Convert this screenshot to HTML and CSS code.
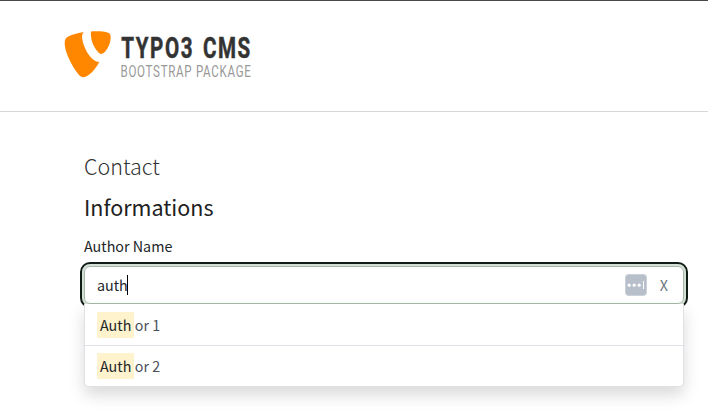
FILE: index.html
```html
<!DOCTYPE html>
<html lang="en">
<head>
<meta charset="utf-8">
<title>Contact</title>
<link rel="stylesheet" href="styles.css">
</head>
<body>
<header class="header">
  <svg class="logo" width="190" height="54" viewBox="0 0 190 54" role="img" aria-label="TYPO3 CMS Bootstrap Package">
    <path fill="#ff8700" d="M20 2.200C17.700 4 17.700 6.500 18.800 11.500C20.900 20 26.200 28.900 32.500 31.500C33.400 31.900 34.200 32 35.400 31.700C32.200 38 25.600 46.800 19.200 47.200C13.700 47.300 4 28.500 1.700 20C.6 15.500 .2 10.600 1.800 8.500C4.600 5.200 13 2.800 20 2.200Z"/>
    <path fill="#ff8700" d="M26.900 1.500C33.700 1 42.500 1.300 45.700 3.500C48 7 46 14.300 43.200 18.700C41.200 22 39.200 23.900 37.200 23.900C33.400 23.700 27.200 13.500 26.900 5.500Z"/>
    <text class="logo-title" x="57.300" y="27.500" textLength="130.500" lengthAdjust="spacingAndGlyphs">TYPO3 CMS</text>
    <text class="logo-subtitle" x="56.500" y="47" textLength="131" lengthAdjust="spacingAndGlyphs">BOOTSTRAP PACKAGE</text>
  </svg>
</header>
<main class="content">
  <h1 class="title">Contact</h1>
  <h2 class="subtitle">Informations</h2>
  <label class="label">Author Name</label>
  <div class="field">
    <span class="value">auth</span><span class="caret"></span>
    <svg class="autofill" width="22" height="22" viewBox="0 0 22 22">
      <rect x=".5" y=".5" width="21" height="21" rx="3" fill="#b7bfca" stroke="#cbd1d9"/>
      <g fill="#fff"><circle cx="4.200" cy="11.200" r="1.600"/><circle cx="9.200" cy="11.200" r="1.600"/><circle cx="14.200" cy="11.200" r="1.600"/><path d="M18 7h1v8h-1z"/></g>
    </svg>
    <span class="clear">X</span>
  </div>
  <div class="suggestions">
    <div class="suggestion"><mark>Auth</mark>or 1</div>
    <div class="suggestion"><mark>Auth</mark>or 2</div>
  </div>
</main>
</body>
</html>
```
FILE: styles.css
```css
* { box-sizing: border-box; }
body {
  margin: 0;
  height: 420px;
  overflow: hidden;
  background: #fff;
  color: #212529;
  border-top: 1px solid #484848;
  font: 14.3px/24px "Noto Sans CJK SC", "Noto Sans", sans-serif;
}
.header {
  height: 111px;
  padding: 29px 0 0 64px;
  border-bottom: 1px solid #d8d8d8;
}
.logo { display: block; overflow: visible; font-family: Roboto, sans-serif; }
.logo-title {
  font-size: 29px;
  font-weight: 700;
  fill: #333;
  stroke: #333;
  stroke-width: .5px;
  letter-spacing: 2.2px;
  word-spacing: 3px;
}
.logo-subtitle { font-size: 16px; font-weight: 400; fill: #999; letter-spacing: 1px; }
.content { padding: 39px 24px 0 84px; }
.title, .subtitle { margin: 0; line-height: 29px; }
.title { font-size: 21.5px; font-weight: 300; color: #313131; }
.subtitle { margin-top: 12px; font-size: 21.5px; font-weight: 400; color: #212121; }
.label { display: block; margin-top: 13px; }
.field {
  display: flex;
  align-items: center;
  height: 38px;
  margin-top: 8px;
  padding: 0 15px 0 12px;
  border: 1px solid #a6b8aa;
  border-radius: 6px;
  box-shadow: 0 0 0 2px #d3ded5;
  outline: 2px solid #101c16;
  outline-offset: 2px;
}
.caret { width: 1px; height: 20px; margin-left: -1px; background: #000; }
.autofill { margin-left: auto; }
.clear { margin-left: 13px; color: #6c757d; }
.suggestions {
  position: relative;
  background: #fff;
  border: 1px solid #dee2e6;
  border-top: 0;
  border-radius: 0 0 5px 5px;
  box-shadow: 0 8px 16px rgba(0, 0, 0, .15);
}
.suggestion {
  display: flex;
  align-items: center;
  height: 41px;
  padding: 0 12px;
  color: #495057;
}
.suggestion + .suggestion { border-top: 1px solid #dee2e6; }
mark { height: 26px; margin-right: .5px; padding: 1px 3px; background: #fff3cd; color: #212529; }
```
